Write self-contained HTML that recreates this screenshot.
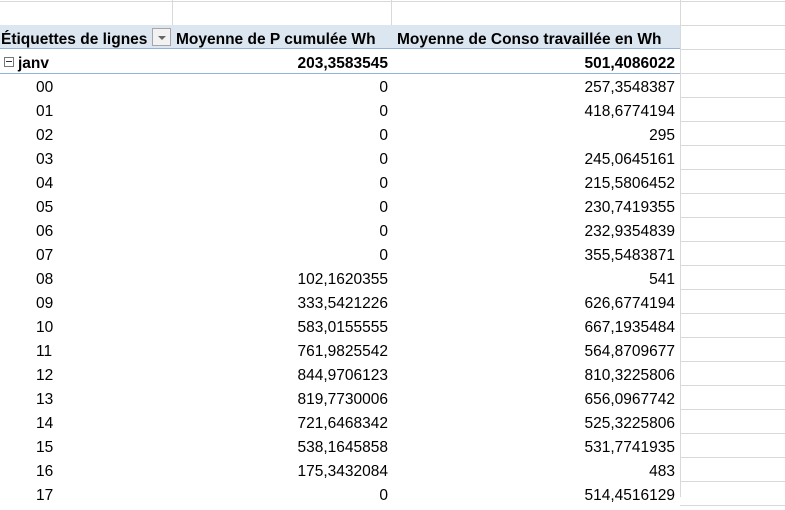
<!DOCTYPE html>
<html><head><meta charset="utf-8"><style>
*{margin:0;padding:0;box-sizing:border-box}
body{width:785px;height:497px;overflow:hidden;background:#fff;font-family:"Liberation Sans",Arial,sans-serif;font-size:15.5px;color:#000;position:relative}
.r{position:absolute;left:0;width:785px;height:24px;line-height:29px}
.a{position:absolute;left:36px}
.b{position:absolute;right:397px;text-align:right}
.c{position:absolute;right:110px;text-align:right}
.gl{position:absolute;background:#d9d9d9}
</style></head><body>
<div class="gl" style="left:0;top:1px;width:785px;height:1px"></div>
<div class="gl" style="left:172px;top:0;width:1px;height:25px"></div>
<div class="gl" style="left:391px;top:0;width:1px;height:25px"></div>
<div class="gl" style="left:680px;top:0;width:1px;height:497px"></div>
<div style="position:absolute;left:0;top:25px;width:680px;height:24px;background:#dce6f1;border-bottom:1px solid #95b3d7"></div>
<div class="r" style="top:25px;font-weight:bold">
<span style="position:absolute;left:1px">Étiquettes de lignes</span>
<span style="position:absolute;left:152px;top:3px;width:19px;height:18px;border:1px solid #a6a6a6;background:#f2f2f2"></span>
<span style="position:absolute;left:158px;top:11px;width:0;height:0;border-left:4px solid transparent;border-right:4px solid transparent;border-top:4px solid #666"></span>
<span style="position:absolute;left:176px">Moyenne de P cumulée Wh</span>
<span style="position:absolute;left:397px">Moyenne de Conso travaillée en Wh</span>
</div>
<div style="position:absolute;left:0;top:73px;width:680px;height:1px;background:#95b3d7"></div>
<div class="r" style="top:49px;font-weight:bold">
<span style="position:absolute;left:4px;top:8px;width:10px;height:10px;border:1px solid #777;background:#fff"></span>
<span style="position:absolute;left:6px;top:12px;width:6px;height:1px;background:#333"></span>
<span style="position:absolute;left:18px">janv</span>
<span class="b">203,3583545</span><span class="c">501,4086022</span>
</div>
<div id="rows"></div>
<script>
var d=[["00","0","257,3548387"],["01","0","418,6774194"],["02","0","295"],["03","0","245,0645161"],["04","0","215,5806452"],["05","0","230,7419355"],["06","0","232,9354839"],["07","0","355,5483871"],["08","102,1620355","541"],["09","333,5421226","626,6774194"],["10","583,0155555","667,1935484"],["11","761,9825542","564,8709677"],["12","844,9706123","810,3225806"],["13","819,7730006","656,0967742"],["14","721,6468342","525,3225806"],["15","538,1645858","531,7741935"],["16","175,3432084","483"],["17","0","514,4516129"]];
var h="";
for(var i=0;i<d.length;i++){var t=73+i*24;
h+='<div class="r" style="top:'+t+'px"><span class="a">'+d[i][0]+'</span><span class="b">'+d[i][1]+'</span><span class="c">'+d[i][2]+'</span></div>';
h+='<div class="gl" style="left:680px;top:'+(t+24)+'px;width:105px;height:1px"></div>';}
h+='<div class="gl" style="left:680px;top:25px;width:105px;height:1px"></div><div class="gl" style="left:680px;top:49px;width:105px;height:1px"></div><div class="gl" style="left:680px;top:73px;width:105px;height:1px"></div>';
document.getElementById("rows").innerHTML=h;
</script>
</body></html>
